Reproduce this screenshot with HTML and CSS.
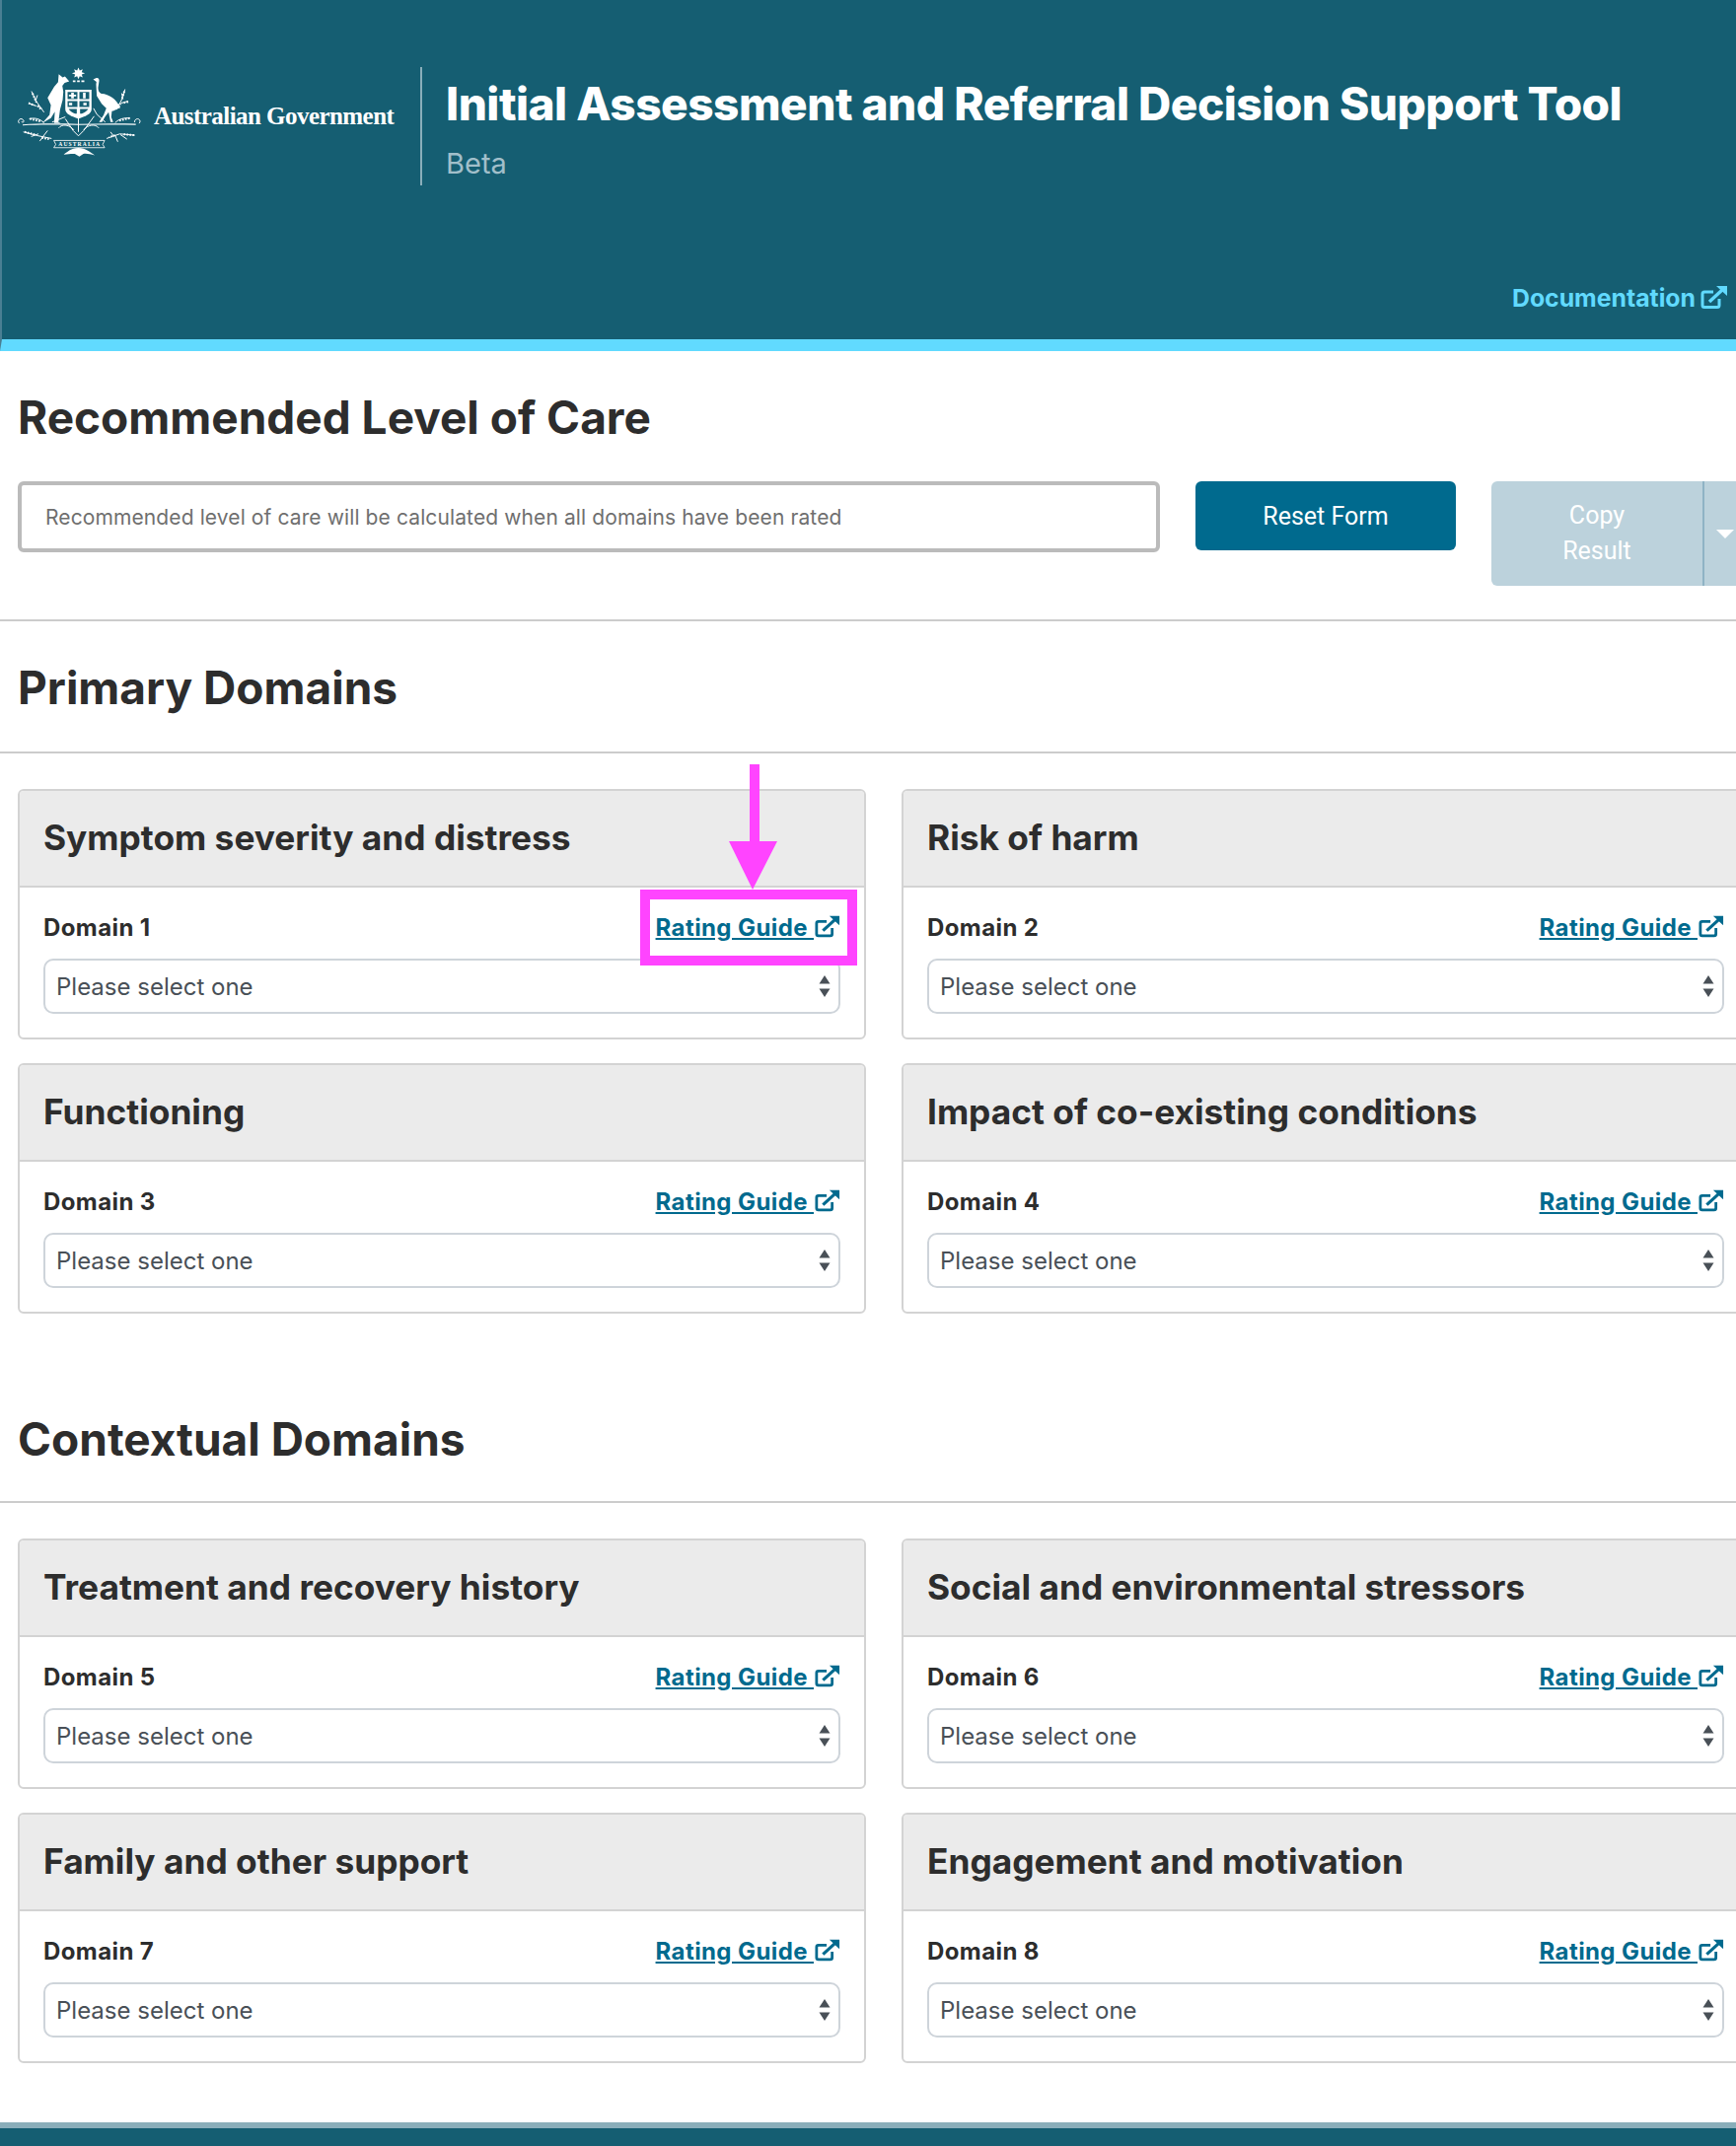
FILE: index.html
```html
<!DOCTYPE html>
<html lang="en">
<head>
    <meta charset="UTF-8">
    <title>Initial Assessment and Referral Decision Support Tool</title>
    <link rel="stylesheet" href="styles.css">
</head>
<body>
<svg class="defs" width="0" height="0">
    <symbol id="ext" viewBox="0 0 28 24">
        <path d="M19 13v6.500a2 2 0 0 1-2 2H4a2 2 0 0 1-2-2V8a2 2 0 0 1 2-2h9" fill="none" stroke="currentColor" stroke-width="3"/>
        <path d="M9 16 22 4" fill="none" stroke="currentColor" stroke-width="3.400"/>
        <path d="M16 0h11v10z" fill="currentColor"/>
    </symbol>
    <symbol id="updown" viewBox="0 0 12 22">
        <path d="M6 0l5.500 8.500H.5zM.5 13.500h11L6 22z" fill="#495057"/>
    </symbol>
</svg>

<header class="site_header">
    <div class="brand">
        <svg class="crest" viewBox="25 25 385 272">
            <g fill="#fff">
                <path d="M210 26l4 9 9-4-3 9 10 3-10 4 3 9-9-4-4 9-4-9-9 4 3-9-10-4 10-3-3-9 9 4z"/>
                <path d="M193 65h8v5h-8zM206 65h8v5h-8zM219 65h9v5h-9z"/>
                <path d="M150 46l12 10 7-3 13 15-14 4-7 9 3 18-2 25-8 30-5 38 7 3h-20l2-35-12 20-26 15 22-25 4-30-10-22 20-34 12-14z"/>
                <path d="M255 62l10-5c6-1 9 4 8 10l-3 20c0 9 3 15 10 18 24 1 46 17 58 43-9 2-14 7-20 9l-6 2-2 18 6 15h-8l-6-30-11 14-9 16h-9l14-22 8-20-14-14-15-24-2-35 1-8z"/>
                <path d="M170 93h80v60c0 15-20 22-40 29-20-7-40-14-40-29z"/>
                <path d="M40 199c48-3 110-3 170-1 60-2 120-2 175-1v4c-55-2-115-1-175 0-60-1-122-2-170 1z"/>
                <path d="M165 291c12-8 22-20 45-20s33 12 50 22c-15-3-25-6-35-4l-12 8-14-8c-10-1-20 1-34 2z"/>
            </g>
            <g fill="none" stroke="#fff" stroke-width="3">
                <path d="M67 98l14 30 24 34M60 135l22 8M85 110l-6 18M100 152l-14-10"/>
                <path d="M352 92l-8 28-18 34M362 128l-22 6M342 104l4 18M322 146l16-10"/>
                <path d="M30 196c-8-8 2-18 10-12s0 12-4 6M60 182c18-4 32 0 45 12M130 192l40-16"/>
                <path d="M395 196c8-8-2-18-10-12s0 12-4 6M368 180c-18-2-34 2-46 14M292 192l-26-24-10-18"/>
                <path d="M42 222l46 12 40 8M66 236l22-8M92 250l12-16M116 218l-14 18"/>
                <path d="M382 232l-46-4-40 14M358 244l-20-14M330 252l-8-20M308 222l10 14"/>
                <path d="M210 178v44M170 182l24 36 16 16 16-16 32-44M150 210c10-14 34-10 46 6M272 210c-10-14-34-10-46 6"/>
                <path d="M135 248h155l-6 12 6 10H135l6-10z" stroke-width="2.500"/>
            </g>
            <g fill="none" stroke="#fff" stroke-width="6" stroke-dasharray="5 4">
                <path d="M70 104l12 28M58 134l18 7M95 152l-10-10M46 222l34 9M98 240l22 4"/>
                <path d="M350 98l-8 26M362 130l-18 4M332 144l8-8M380 232l-36-3M322 232l-18 6"/>
                <path d="M62 182l34 8M366 180l-34 8"/>
            </g>
            <g fill="#155e72">
                <path d="M177 100h30v22h-30zM213 100h30v22h-30z"/>
                <path d="M177 128h30v18h-30zM213 128h30v18h-30z"/>
                <path d="M180 152h25v14h-5c-8-2-14-6-20-14zM215 152h25c-6 8-12 12-20 14h-5z"/>
            </g>
            <g fill="#fff">
                <path d="M188 102h8v18h-8zM181 108h22v6h-22zM224 102h8v18h-8zM181 133h10v8h-10zM225 133h10v8h-10z"/>
            </g>
            <text class="crest_scroll" x="212" y="265" text-anchor="middle" textLength="126">AUSTRALIA</text>
        </svg>
        <span class="gov_name">Australian Government</span>
    </div>
    <div class="titles">
        <h1>Initial Assessment and Referral Decision Support Tool</h1>
        <p class="beta">Beta</p>
    </div>
    <a class="doc_link">Documentation<svg class="ext_doc"><use href="#ext"/></svg></a>
</header>

<main>
    <section class="level_section">
        <h2>Recommended Level of Care</h2>
        <div class="level_row">
            <div class="level_box">Recommended level of care will be calculated when all domains have been rated</div>
            <button class="btn_reset" type="button">Reset Form</button>
            <div class="btn_copy">
                <span class="copy_label">Copy<br>Result</span>
                <span class="copy_caret"></span>
            </div>
        </div>
    </section>

    <section>
        <h2 class="section_title">Primary Domains</h2>
        <div class="domains">
            <div class="card">
                <h3>Symptom severity and distress</h3>
                <div class="card_body">
                    <div class="label_row"><b>Domain 1</b><a class="guide"><u>Rating Guide </u><svg class="ext_small"><use href="#ext"/></svg></a></div>
                    <div class="select">Please select one<svg class="updown"><use href="#updown"/></svg></div>
                </div>
            </div>
            <div class="card">
                <h3>Risk of harm</h3>
                <div class="card_body">
                    <div class="label_row"><b>Domain 2</b><a class="guide"><u>Rating Guide </u><svg class="ext_small"><use href="#ext"/></svg></a></div>
                    <div class="select">Please select one<svg class="updown"><use href="#updown"/></svg></div>
                </div>
            </div>
            <div class="card">
                <h3>Functioning</h3>
                <div class="card_body">
                    <div class="label_row"><b>Domain 3</b><a class="guide"><u>Rating Guide </u><svg class="ext_small"><use href="#ext"/></svg></a></div>
                    <div class="select">Please select one<svg class="updown"><use href="#updown"/></svg></div>
                </div>
            </div>
            <div class="card">
                <h3>Impact of co-existing conditions</h3>
                <div class="card_body">
                    <div class="label_row"><b>Domain 4</b><a class="guide"><u>Rating Guide </u><svg class="ext_small"><use href="#ext"/></svg></a></div>
                    <div class="select">Please select one<svg class="updown"><use href="#updown"/></svg></div>
                </div>
            </div>
        </div>
    </section>

    <section class="contextual">
        <h2 class="section_title">Contextual Domains</h2>
        <div class="domains">
            <div class="card">
                <h3>Treatment and recovery history</h3>
                <div class="card_body">
                    <div class="label_row"><b>Domain 5</b><a class="guide"><u>Rating Guide </u><svg class="ext_small"><use href="#ext"/></svg></a></div>
                    <div class="select">Please select one<svg class="updown"><use href="#updown"/></svg></div>
                </div>
            </div>
            <div class="card">
                <h3>Social and environmental stressors</h3>
                <div class="card_body">
                    <div class="label_row"><b>Domain 6</b><a class="guide"><u>Rating Guide </u><svg class="ext_small"><use href="#ext"/></svg></a></div>
                    <div class="select">Please select one<svg class="updown"><use href="#updown"/></svg></div>
                </div>
            </div>
            <div class="card">
                <h3>Family and other support</h3>
                <div class="card_body">
                    <div class="label_row"><b>Domain 7</b><a class="guide"><u>Rating Guide </u><svg class="ext_small"><use href="#ext"/></svg></a></div>
                    <div class="select">Please select one<svg class="updown"><use href="#updown"/></svg></div>
                </div>
            </div>
            <div class="card">
                <h3>Engagement and motivation</h3>
                <div class="card_body">
                    <div class="label_row"><b>Domain 8</b><a class="guide"><u>Rating Guide </u><svg class="ext_small"><use href="#ext"/></svg></a></div>
                    <div class="select">Please select one<svg class="updown"><use href="#updown"/></svg></div>
                </div>
            </div>
        </div>
    </section>
</main>

<footer class="site_footer"></footer>

<div class="mark_box"></div>
<svg class="mark_arrow" viewBox="0 0 50 127"><path d="M21 0h10v78h18L24 127 0 78h21z" fill="#ff44ff"/></svg>
</body>
</html>
```

FILE: styles.css
```css
* {
    box-sizing: border-box;
}

html, body {
    margin: 0;
    padding: 0;
}

body {
    position: relative;
    width: 1760px;
    height: 2176px;
    overflow: hidden;
    background: #fff;
    color: #2d2d2d;
    font-family: Inter, "Liberation Sans", sans-serif;
}

.defs {
    position: absolute;
}

.site_header {
    display: flex;
    position: relative;
    height: 356px;
    padding: 68px 0 0 16px;
    background: #155e72;
    border-left: 2px solid #4a7f93;
    border-bottom: 12px solid #61daff;
}

.brand {
    display: flex;
    flex: none;
    width: 410px;
    height: 120px;
    border-right: 2px solid #8aaeba;
}

.crest {
    width: 128px;
    height: 91px;
    flex: none;
}

.crest_scroll {
    font: bold 17px "Liberation Serif", serif;
    fill: #fff;
}

.gov_name {
    margin: 35px 0 0 10px;
    color: #fff;
    font: bold 25px/30px "Liberation Serif", serif;
    letter-spacing: -0.55px;
    white-space: nowrap;
}

.titles {
    padding-left: 24px;
}

h1 {
    margin: 8px 0 0;
    color: #fff;
    font-size: 46px;
    line-height: 58px;
    font-weight: 800;
    letter-spacing: -0.5px;
    white-space: nowrap;
}

.beta {
    margin: 15px 0 0;
    color: #a1bfca;
    font-size: 29px;
    line-height: 34px;
}

.doc_link {
    display: flex;
    align-items: center;
    position: absolute;
    right: 8px;
    top: 286px;
    color: #61daff;
    font-size: 24.800px;
    line-height: 32px;
    font-weight: 700;
}

.ext_doc {
    width: 28px;
    height: 24px;
    margin-left: 5px;
}

h2 {
    margin: 0;
    font-size: 46px;
    line-height: 56px;
    font-weight: 700;
    color: #2d2d2d;
}

.level_section {
    padding: 39px 0 0 18px;
    height: 274px;
    border-bottom: 2px solid #ccc;
}

.level_row {
    display: flex;
    align-items: flex-start;
    margin-top: 37px;
}

.level_box {
    flex: none;
    width: 1158px;
    height: 72px;
    padding: 0 24px;
    border: 4px solid #bbb;
    border-radius: 6px;
    color: #6f6f6f;
    font-size: 21px;
    letter-spacing: 0.11px;
    line-height: 66px;
}

.btn_reset {
    flex: none;
    width: 264px;
    height: 70px;
    margin-left: 36px;
    border: 0;
    border-radius: 6px;
    background: #006a8e;
    color: #fff;
    font: 25px Roboto, sans-serif;
}

.btn_copy {
    display: flex;
    flex: none;
    width: 300px;
    height: 106px;
    margin-left: 36px;
    border-radius: 6px;
    background: #bcd2dc;
    color: #fff;
    font: 25px/36px Roboto, sans-serif;
}

.copy_label {
    width: 216px;
    padding-top: 17px;
    text-align: center;
    border-right: 2px solid #8fb3c5;
}

.copy_caret {
    align-self: center;
    width: 0;
    height: 0;
    margin-left: 12px;
    border-top: 9px solid #fff;
    border-left: 9px solid transparent;
    border-right: 9px solid transparent;
}

.section_title {
    height: 134px;
    padding: 39px 0 0 18px;
    line-height: 56px;
    border-bottom: 2px solid #ccc;
}

.contextual {
    margin-top: 58px;
}

.contextual .section_title {
    padding-top: 41px;
}

.domains {
    display: grid;
    grid-template-columns: 860px 860px;
    column-gap: 36px;
    row-gap: 24px;
    padding: 36px 0 0 18px;
}

.card {
    height: 254px;
    border: 2px solid #d3d3d3;
    border-radius: 6px;
    overflow: hidden;
}

h3 {
    margin: 0;
    height: 98px;
    padding: 0 24px;
    background: #ebebeb;
    border-bottom: 2px solid #d3d3d3;
    font-size: 35.300px;
    line-height: 95px;
    font-weight: 700;
    color: #2d2d2d;
}

.card_body {
    padding: 24px 24px 0;
}

.label_row {
    display: flex;
    justify-content: space-between;
    align-items: center;
    height: 32px;
    font-size: 24px;
    letter-spacing: 0.4px;
    color: #2d2d2d;
}

.label_row b {
    font-weight: 700;
}

.guide {
    display: flex;
    align-items: center;
    color: #006a8e;
    font-weight: 700;
    white-space: pre;
}

.ext_small {
    width: 26px;
    height: 24px;
    margin-left: 1px;
}

.select {
    display: flex;
    justify-content: space-between;
    align-items: center;
    height: 56px;
    margin-top: 16px;
    padding: 0 8px 0 11px;
    border: 2px solid #ced4da;
    border-radius: 10px;
    color: #495057;
    font-size: 24px;
    letter-spacing: 0;
}

.updown {
    width: 12px;
    height: 22px;
}

.site_footer {
    position: absolute;
    left: 0;
    right: 0;
    top: 2152px;
    height: 24px;
    background: #155e72;
    border-top: 6px solid #8aaeba;
}

.mark_box {
    position: absolute;
    left: 649px;
    top: 902px;
    width: 220px;
    height: 77px;
    border: 10px solid #ff44ff;
}

.mark_arrow {
    position: absolute;
    left: 739px;
    top: 775px;
    width: 50px;
    height: 127px;
}
```
